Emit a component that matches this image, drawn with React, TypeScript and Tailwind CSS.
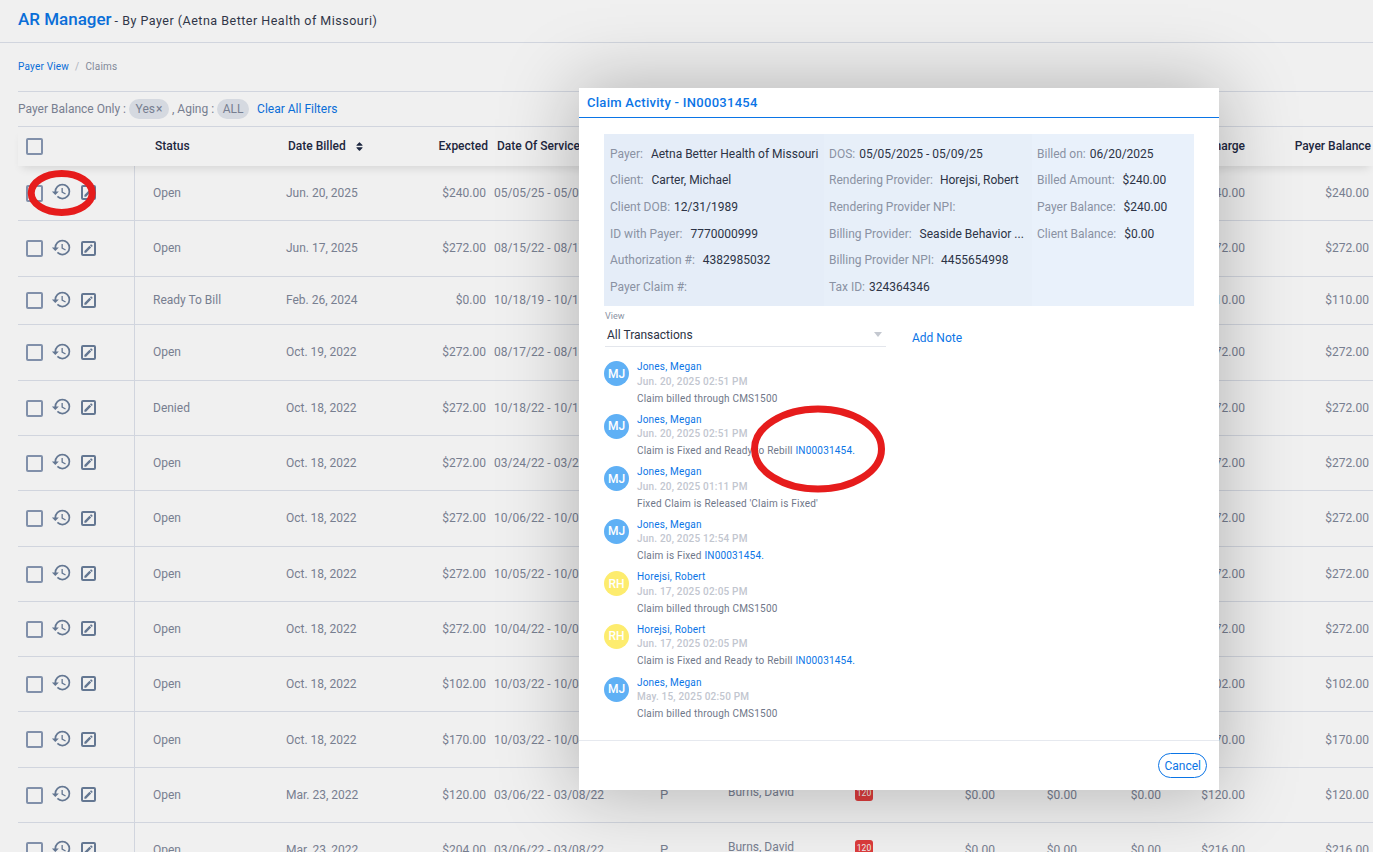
import React from 'react';
import { MdHistory, MdEdit } from 'react-icons/md';
import { FaSort } from 'react-icons/fa';

const gridCols = 'grid grid-cols-[117px_150px_135px_67px_168px_68px_127px_80px_65px_82px_84px_84px_124px_4px]';

type Row = { status: string; billed: string; expected: string; dos: string; balance: string; charge?: string; h: string; up?: boolean; detail?: boolean };

const rows: Row[] = [
  { status: 'Open', billed: 'Jun. 20, 2025', expected: '$240.00', dos: '05/05/25 - 05/09/25', balance: '$240.00', h: 'h-[55px]' },
  { status: 'Open', billed: 'Jun. 17, 2025', expected: '$272.00', dos: '08/15/22 - 08/17/22', balance: '$272.00', h: 'h-[56px]', up: true },
  { status: 'Ready To Bill', billed: 'Feb. 26, 2024', expected: '$0.00', dos: '10/18/19 - 10/18/19', balance: '$110.00', charge: '$110.00', h: 'h-[48px]', up: true },
  { status: 'Open', billed: 'Oct. 19, 2022', expected: '$272.00', dos: '08/17/22 - 08/19/22', balance: '$272.00', h: 'h-[56px]', up: true },
  { status: 'Denied', billed: 'Oct. 18, 2022', expected: '$272.00', dos: '10/18/22 - 10/19/22', balance: '$272.00', h: 'h-[55px]' },
  { status: 'Open', billed: 'Oct. 18, 2022', expected: '$272.00', dos: '03/24/22 - 03/25/22', balance: '$272.00', h: 'h-[55px]' },
  { status: 'Open', billed: 'Oct. 18, 2022', expected: '$272.00', dos: '10/06/22 - 10/07/22', balance: '$272.00', h: 'h-[56px]', up: true },
  { status: 'Open', billed: 'Oct. 18, 2022', expected: '$272.00', dos: '10/05/22 - 10/06/22', balance: '$272.00', h: 'h-[55px]' },
  { status: 'Open', billed: 'Oct. 18, 2022', expected: '$272.00', dos: '10/04/22 - 10/05/22', balance: '$272.00', h: 'h-[55px]' },
  { status: 'Open', billed: 'Oct. 18, 2022', expected: '$102.00', dos: '10/03/22 - 10/04/22', balance: '$102.00', h: 'h-[55px]' },
  { status: 'Open', billed: 'Oct. 18, 2022', expected: '$170.00', dos: '10/03/22 - 10/04/22', balance: '$170.00', h: 'h-[56px]' },
  { status: 'Open', billed: 'Mar. 23, 2022', expected: '$120.00', dos: '03/06/22 - 03/08/22', balance: '$120.00', h: 'h-[55px]', detail: true },
  { status: 'Open', billed: 'Mar. 23, 2022', expected: '$204.00', dos: '03/06/22 - 03/08/22', balance: '$216.00', h: 'h-[55px]', detail: true },
];

const activity = [
  { who: 'Jones, Megan', init: 'MJ', when: 'Jun. 20, 2025 02:51 PM', text: 'Claim billed through CMS1500' },
  { who: 'Jones, Megan', init: 'MJ', when: 'Jun. 20, 2025 02:51 PM', text: 'Claim is Fixed and Ready to Rebill ', link: true },
  { who: 'Jones, Megan', init: 'MJ', when: 'Jun. 20, 2025 01:11 PM', text: "Fixed Claim is Released 'Claim is Fixed'" },
  { who: 'Jones, Megan', init: 'MJ', when: 'Jun. 20, 2025 12:54 PM', text: 'Claim is Fixed ', link: true },
  { who: 'Horejsi, Robert', init: 'RH', when: 'Jun. 17, 2025 02:05 PM', text: 'Claim billed through CMS1500' },
  { who: 'Horejsi, Robert', init: 'RH', when: 'Jun. 17, 2025 02:05 PM', text: 'Claim is Fixed and Ready to Rebill ', link: true },
  { who: 'Jones, Megan', init: 'MJ', when: 'May. 15, 2025 02:50 PM', text: 'Claim billed through CMS1500' },
];

function Check() {
  return <span className="block w-[17px] h-[17px] border-2 border-[#8a9ab5] rounded-[2px] shrink-0" />;
}

function EditBox() {
  return (
    <span className="flex items-center justify-center w-[15px] h-[15px] border-2 border-[#6b7f9c] rounded-[2px] shrink-0">
      <MdEdit className="text-[#6b7f9c] text-[11px]" />
    </span>
  );
}

function Field({ label, value, gap = 'ml-[7px]' }: { label: string; value?: string; gap?: string }) {
  return (
    <div className="h-[26.7px] flex items-center whitespace-nowrap">
      <span className="text-[#8a92a3]">{label}</span>
      {value && <span className={`text-[#2c3345] ${gap}`}>{value}</span>}
    </div>
  );
}

export default function App() {
  return (
    <div className="relative w-[1373px] h-[852px] overflow-hidden bg-white text-[12px] font-['Roboto',sans-serif]">
      {/* page behind the dialog */}
      <div className="h-[43px] pl-[18px] pb-[3px] flex items-center border-b border-[#dfe3ec] whitespace-nowrap">
        <span className="text-[#0b75e6] text-[17px] font-medium">AR Manager</span>
        <span className="text-[#333a4d] text-[12.5px] tracking-[0.5px] ml-[3px] mt-[3px]">- By Payer (Aetna Better Health of Missouri)</span>
      </div>
      <div className="pl-[18px]">
        <div className="h-[49px] pb-[2px] flex items-center text-[10px] tracking-[0.2px] border-b border-[#dfe3ec]">
          <span className="text-[#0b75e6]">Payer View</span>
          <span className="text-[#b8bdc9] mx-[6px]">/</span>
          <span className="text-[#8a92a3]">Claims</span>
        </div>
        <div className="h-[35px] flex items-center border-b border-[#dfe3ec] whitespace-nowrap text-[#7f879a]">
          <span>Payer Balance Only :</span>
          <span className="ml-[3px] w-[40px] h-[20px] flex items-center justify-center rounded-full bg-[#e3e7ef]">Yes<span className="text-[12px] ml-[1px]">×</span></span>
          <span className="ml-[3px]">, Aging :</span>
          <span className="ml-[3px] w-[32px] h-[20px] flex items-center justify-center rounded-full bg-[#e3e7ef]">ALL</span>
          <span className="ml-[8px] text-[#0b75e6]">Clear All Filters</span>
        </div>
        <div className={`${gridCols} h-[39px] pb-[1px] items-center text-[#1f2a44] font-medium whitespace-nowrap relative shadow-[0_6px_10px_-4px_rgba(0,0,0,0.12)]`}>
          <div className="pl-[8px]"><Check /></div>
          <div className="pl-[20px]">Status</div>
          <div className="pl-[3px] flex items-center gap-[8px]">Date Billed <FaSort className="text-[11px]" /></div>
          <div className="text-right -mr-[1px]">Expected</div>
          <div className="pl-[10px]">Date Of Service</div>
          <div />
          <div />
          <div />
          <div />
          <div />
          <div />
          <div className="text-right">Charge</div>
          <div className="text-right -mr-[2px]">Payer Balance</div>
          <div />
        </div>
        {rows.map((r, i) => {
          const shift = r.up ? '-translate-y-[1px]' : '';
          return (
            <div key={i} className={`${gridCols} ${r.h} items-center text-[#7f879a] border-b border-[#dfe3ec] whitespace-nowrap`}>
              <div className="h-full border-r border-[#dfe3ec] pl-[8px] flex items-center">
                <Check />
                <MdHistory className="ml-[8px] text-[21px] text-[#6b7f9c] -mt-[3px]" />
                <span className="ml-[9px] -mt-[1px]"><EditBox /></span>
              </div>
              <div className={`pl-[18px] ${shift}`}>{r.status}</div>
              <div className={`pl-[1px] ${shift}`}>{r.billed}</div>
              <div className={`text-right pr-[1px] ${shift}`}>{r.expected}</div>
              <div className={`pl-[7px] ${shift}`}>{r.dos}</div>
              {r.detail ? (
                <>
                  <div className="pl-[5px] text-[13px]">P</div>
                  <div className="pl-[5px] -mt-[6px]">Burns, David</div>
                  <div className="pl-[5px] -mt-[4px]">
                    <span className="flex items-center justify-center w-[18px] h-[16px] rounded-[3px] bg-[#ea4040] text-white text-[8.5px]">120</span>
                  </div>
                  <div className="text-right">$0.00</div>
                  <div className="text-right">$0.00</div>
                  <div className="text-right">$0.00</div>
                </>
              ) : (
                <>
                  <div />
                  <div />
                  <div />
                  <div />
                  <div />
                  <div />
                </>
              )}
              <div className={`text-right ${shift}`}>{r.charge ?? r.balance}</div>
              <div className={`text-right ${shift}`}>{r.balance}</div>
              <div />
            </div>
          );
        })}
      </div>

      {/* dialog backdrop */}
      <div className="absolute inset-0 bg-black/[0.06]" />

      {/* red annotation around the history icon */}
      <svg className="absolute left-[22px] top-[166px]" width="78" height="54" viewBox="0 0 78 54">
        <ellipse cx="39.7" cy="27" rx="30.5" ry="19.5" fill="none" stroke="#e61c1c" strokeWidth="7" />
      </svg>

      {/* dialog */}
      <div className="absolute left-[579px] top-[88px] w-[640px] h-[702px] bg-white flex flex-col shadow-[0_0_70px_4px_rgba(0,0,0,0.25)]">
        <div className="h-[30px] shrink-0 pl-[8px] flex items-center border-b border-[#0b75e6] text-[#0b75e6] text-[13px] font-medium tracking-[0.28px]">
          Claim Activity - IN00031454
        </div>
        <div className="mt-[16px] mx-[25px] h-[172px] grid grid-cols-[220px_208px_162px] shrink-0">
          <div className="bg-[#e5edf8] pl-[6px] pt-[6.4px]">
            <Field label="Payer:" value="Aetna Better Health of Missouri" gap="ml-[8px]" />
            <Field label="Client:" value="Carter, Michael" gap="ml-[8px]" />
            <Field label="Client DOB:" value="12/31/1989" gap="ml-[4px]" />
            <Field label="ID with Payer:" value="7770000999" gap="ml-[8px]" />
            <Field label="Authorization #:" value="4382985032" gap="ml-[8px]" />
            <Field label="Payer Claim #:" />
          </div>
          <div className="bg-[#e7eff9] pl-[5px] pt-[6.4px]">
            <Field label="DOS:" value="05/05/2025 - 05/09/25" gap="ml-[4px]" />
            <Field label="Rendering Provider:" value="Horejsi, Robert" gap="ml-[7px]" />
            <Field label="Rendering Provider NPI:" />
            <Field label="Billing Provider:" value="Seaside Behavior ..." gap="ml-[8px]" />
            <Field label="Billing Provider NPI:" value="4455654998" gap="ml-[7px]" />
            <Field label="Tax ID:" value="324364346" gap="ml-[4px]" />
          </div>
          <div className="bg-[#e9f1fb] pl-[5px] pt-[6.4px]">
            <Field label="Billed on:" value="06/20/2025" gap="ml-[4px]" />
            <Field label="Billed Amount:" value="$240.00" gap="ml-[8px]" />
            <Field label="Payer Balance:" value="$240.00" gap="ml-[8px]" />
            <Field label="Client Balance:" value="$0.00" gap="ml-[8px]" />
          </div>
        </div>
        <div className="mx-[25px] mt-[5px] flex items-end h-[36px] shrink-0">
          <div className="w-[281px] ml-[1px] border-b border-[#e3e6ec]">
            <div className="text-[9px] text-[#8a92a3] leading-[12px] -mt-[1px] mb-[1px]">View</div>
            <div className="h-[23px] flex items-center justify-between pl-[2px] pr-[4px] text-[#2c3345]">
              All Transactions
              <span className="w-0 h-0 border-x-[4px] border-x-transparent border-t-[5px] border-t-[#c4c8d0]" />
            </div>
          </div>
          <span className="ml-[26px] text-[#0b75e6]">Add Note</span>
        </div>
        <div className="mx-[25px] mt-[13px] flex-1">
          {activity.map((a, i) => (
            <div key={i} className="h-[52.6px] flex whitespace-nowrap">
              <span className={`mt-[1px] w-[25px] h-[25px] rounded-full flex items-center justify-center text-white text-[12px] font-medium shrink-0 ${a.init === 'MJ' ? 'bg-[#5fb0f5]' : 'bg-[#fdec6e]'}`}>
                {a.init}
              </span>
              <div className="ml-[8px] text-[10px] tracking-[0.2px] leading-[14.5px]">
                <div className="text-[#0b75e6]">{a.who}</div>
                <div className="text-[#c2c6cf] font-medium">{a.when}</div>
                <div className="text-[#6f7789] mt-[2.5px]">
                  {a.text}
                  {a.link && <span className="text-[#0b75e6]">IN00031454.</span>}
                </div>
              </div>
            </div>
          ))}
        </div>
        <div className="h-[50px] shrink-0 border-t border-[#e6e9ef] flex items-center justify-end pr-[12px]">
          <span className="h-[25px] px-[5px] flex items-center rounded-full border border-[#0b75e6] text-[#0b75e6]">Cancel</span>
        </div>
      </div>

      {/* red annotation around the invoice link */}
      <svg className="absolute left-[745px] top-[400px]" width="146" height="98" viewBox="0 0 146 98">
        <ellipse cx="73" cy="49" rx="63.5" ry="40" fill="none" stroke="#e61c1c" strokeWidth="7" />
      </svg>
    </div>
  );
}
